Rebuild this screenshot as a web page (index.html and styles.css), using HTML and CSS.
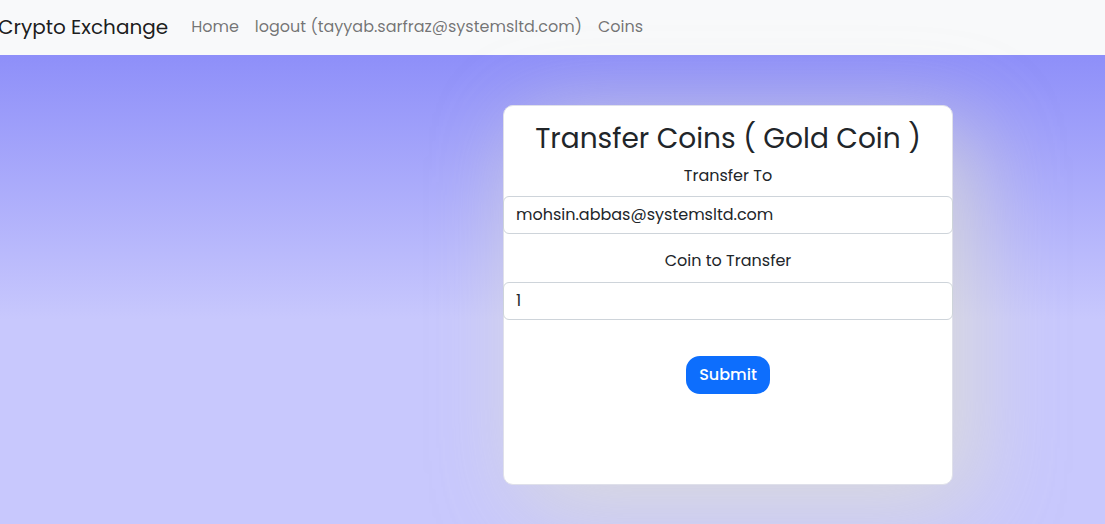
FILE: index.html
```html
<!DOCTYPE html>
<html lang="en">
<head>
<meta charset="utf-8">
<title>Transfer Coins</title>
<link rel="stylesheet" href="styles.css">
</head>
<body>
<nav class="navbar">
  <a class="brand" href="#">Crypto Exchange</a>
  <ul class="nav">
    <li><a class="nav-link" href="#">Home</a></li>
    <li><a class="nav-link" href="#">logout (tayyab.sarfraz@systemsltd.com)</a></li>
    <li><a class="nav-link" href="#">Coins</a></li>
  </ul>
</nav>
<main class="page">
  <form class="card">
    <h2 class="title">Transfer Coins ( Gold Coin )</h2>
    <label class="label" for="to">Transfer To</label>
    <input class="input" id="to" type="text" value="mohsin.abbas@systemsltd.com">
    <label class="label second" for="amt">Coin to Transfer</label>
    <input class="input" id="amt" type="text" value="1">
    <div class="actions">
      <button class="btn" type="button">Submit</button>
    </div>
  </form>
</main>
</body>
</html>
```
FILE: styles.css
```css
* { box-sizing: border-box; }
html, body { margin: 0; height: 100%; }
body {
  font-family: "Poppins", "Inter", "Open Sans", sans-serif;
  color: #212529;
  font-size: 16px;
  line-height: 1.5;
  background: #c8c8fd;
  overflow: hidden;
}
.navbar {
  height: 55px;
  padding-bottom: 2px;
  background: #f8f9fa;
  display: flex;
  align-items: center;
}
.brand {
  margin-left: -2px;
  margin-right: 15px;
  font-size: 20px;
  color: rgba(0,0,0,.9);
  text-decoration: none;
  white-space: nowrap;
}
.nav {
  list-style: none;
  margin: 0;
  padding: 0;
  display: flex;
}
.nav-link {
  display: block;
  padding: 8px;
  color: rgba(0,0,0,.55);
  text-decoration: none;
  white-space: nowrap;
}
.page {
  height: calc(100% - 55px);
  background: linear-gradient(180deg, #8e8ff9 0px, #c8c8fd 265px, #c8c8fd 100%);
  padding: 50px 0 0 503px;
}
.card {
  width: 450px;
  height: 380px;
  background: #fff;
  border: 1px solid #dfe0ea;
  border-radius: 10px;
  box-shadow: 20px 20px 90px rgba(225,225,205,.75);
  display: flex;
  flex-direction: column;
  align-items: stretch;
}
.title {
  margin: 16px 0 0;
  font-size: 28px;
  font-weight: 400;
  line-height: 1.2;
  text-align: center;
}
.label {
  display: block;
  margin-top: 8px;
  margin-bottom: 8px;
  text-align: center;
}
.label.second { margin-top: 15px; margin-bottom: 9px; }
.input {
  display: block;
  height: 38px;
  margin: 0 -1px;
  width: calc(100% + 2px);
  padding: 6px 12px;
  font: inherit;
  color: #212529;
  background: #fff;
  border: 1px solid #ced4da;
  border-radius: 6px;
}
.actions {
  display: flex;
  justify-content: center;
  margin-top: 36px;
}
.btn {
  height: 38px;
  padding: 0 13px;
  font: inherit;
  font-weight: 500;
  color: #fff;
  background: #0d6efd;
  border: 0;
  border-radius: 14px;
}
```
